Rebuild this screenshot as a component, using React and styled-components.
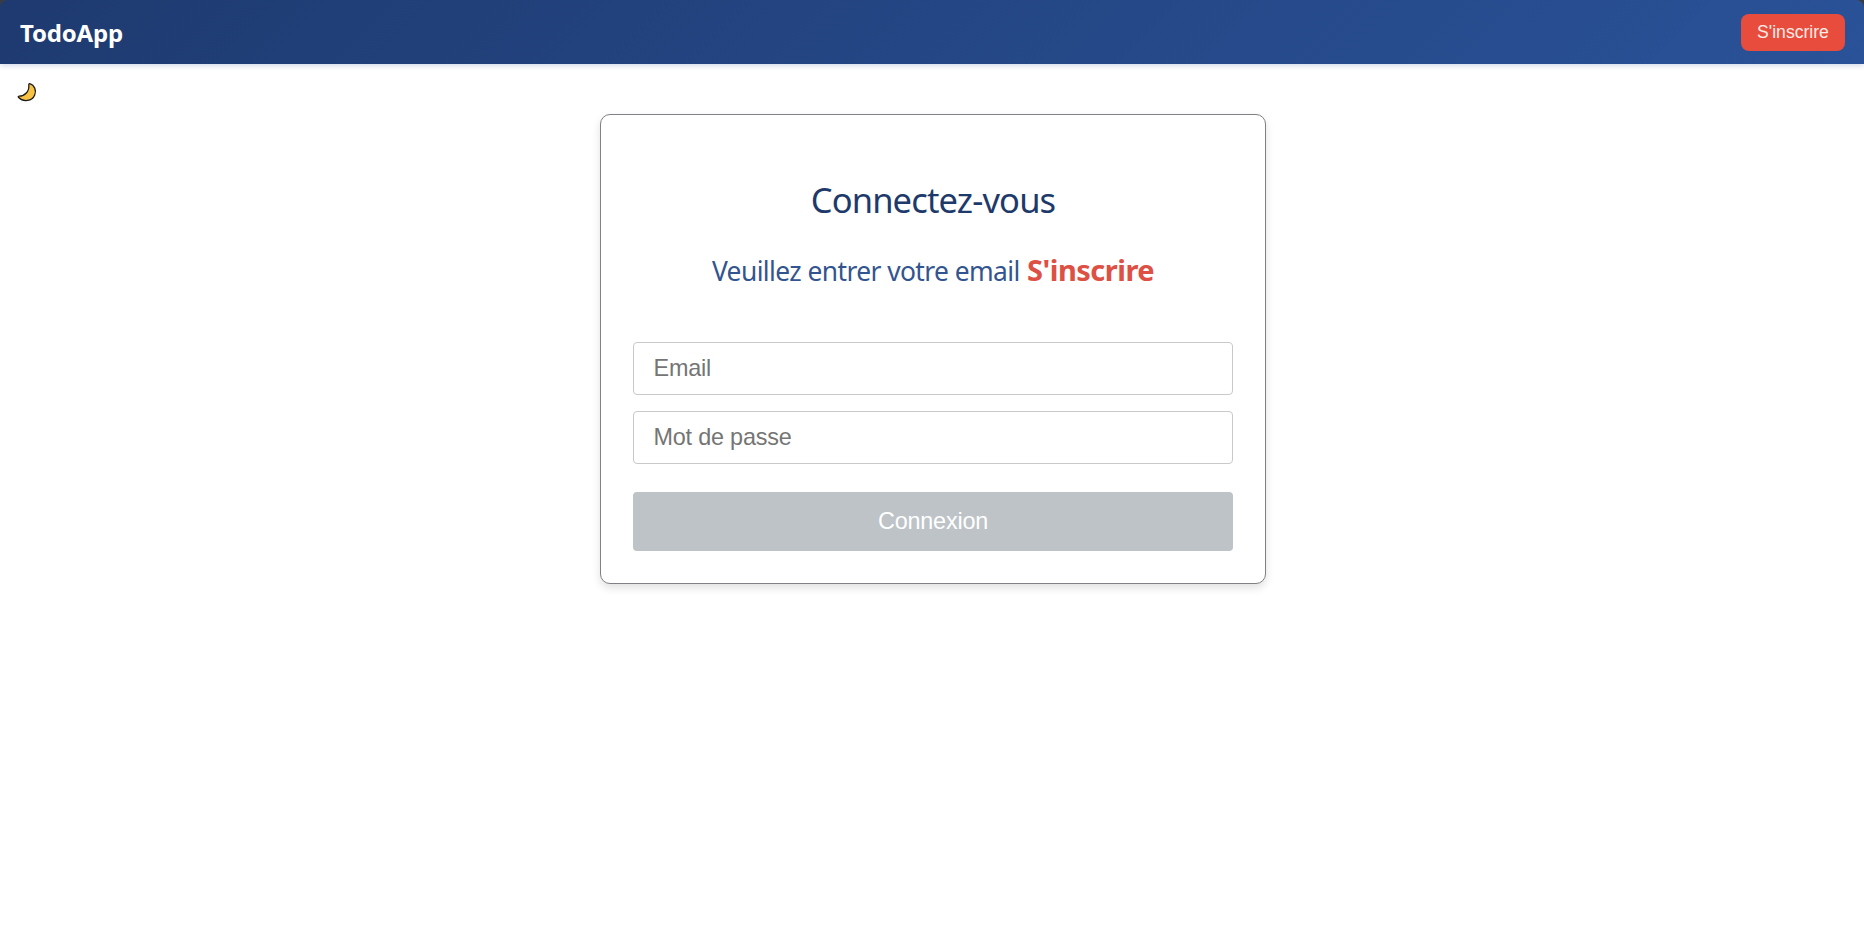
import React from "react";
import styled, { createGlobalStyle } from "styled-components";

const GlobalStyle = createGlobalStyle`
  *, *::before, *::after { box-sizing: border-box; }
  html { background: #fff; }
  body {
    margin: 0;
    min-height: 952px;
    background: #fff;
    font-family: "Noto Sans", "Open Sans", sans-serif;
  }
`;

const Page = styled.div`
  display: flex;
  flex-direction: column;
  min-height: 952px;
  background: #fff;
`;

const HeaderFrame = styled.div`
  height: 64px;
  background: linear-gradient(#3a3d42, #3a3d42) top / 100% 20px no-repeat;
`;

const Header = styled.header`
  display: flex;
  align-items: center;
  justify-content: space-between;
  height: 64px;
  padding: 0 19px 0 20px;
  border-radius: 8px 8px 0 0;
  background: linear-gradient(135deg, #1e3a70 0%, #2a5298 100%);
  box-shadow: 0 2px 5px rgba(42, 82, 152, 0.2);
`;

const Logo = styled.div`
  padding-top: 2px;
  color: #fff;
  font-size: 24px;
  font-weight: 700;
  line-height: 32px;
  letter-spacing: -0.2px;
`;

const SignUpButton = styled.button`
  width: 104px;
  height: 37px;
  margin-top: 1px;
  padding: 0 0 1px;
  border: 0;
  border-radius: 8px;
  background: #e74c3c;
  color: #ffece8;
  font: 17.6px "Liberation Sans", Arial, sans-serif;
`;

const ThemeBar = styled.div`
  display: flex;
  height: 50px;
  padding: 18px 0 0 17px;
`;

const ThemeToggle = styled.button`
  width: 20px;
  height: 20px;
  padding: 0;
  border: 0;
  background: none;
  svg { display: block; }
`;

const Card = styled.main`
  display: flex;
  flex-direction: column;
  width: 666px;
  height: 470px;
  margin: 0 0 0 600px;
  padding: 63px 32px 32px;
  border: 1px solid #7f8184;
  border-radius: 10px;
  background: #fff;
  box-shadow: 0 4px 8px rgba(0, 0, 0, 0.12);
`;

const Title = styled.h1`
  margin: 0;
  color: #1e3a6b;
  font-size: 34.5px;
  font-weight: 400;
  line-height: 44px;
  letter-spacing: -0.85px;
  text-align: center;
  white-space: nowrap;
`;

const Subtitle = styled.p`
  margin: 26px 0 0;
  color: #33558f;
  font-size: 26.4px;
  line-height: 44px;
  letter-spacing: -0.58px;
  text-align: center;
  white-space: nowrap;
`;

const SignUpLink = styled.a`
  margin-left: 1px;
  color: #dd5044;
  font-size: 29px;
  font-weight: 700;
  letter-spacing: -0.5px;
`;

const Form = styled.form`
  display: flex;
  flex-direction: column;
  gap: 16px;
  margin-top: 49px;
`;

const Field = styled.input`
  width: 100%;
  height: 53px;
  padding: 0 20px 0 19.5px;
  border: 1px solid #c8c9cb;
  border-radius: 4px;
  background: #fff;
  font: 23.4px "Liberation Sans", Arial, sans-serif;
  letter-spacing: -0.2px;
  &::placeholder { color: #757575; opacity: 1; }
`;

const SubmitButton = styled.button`
  height: 59px;
  margin-top: 12px;
  padding: 0;
  border: 0;
  border-radius: 4px;
  background: #bdc3c7;
  color: #fff;
  font: 23.4px "Liberation Sans", Arial, sans-serif;
  letter-spacing: -0.2px;
`;

const MoonIcon = () => (
  <svg width="20" height="20" viewBox="0 0 20 20" aria-hidden="true">
    <path
      d="M12.9 1.7C17.3 3.2 19.8 8.2 17.7 13C15.2 19.2 6.4 20.6 1.4 15.2C1 14.6 1.4 14.2 2.1 14.2C7.6 14 12.6 9.6 11.8 2.9C11.7 2.1 12.1 1.4 12.9 1.7Z"
      fill="#f6c244"
      stroke="#1c1a17"
      strokeWidth="1.3"
      strokeLinejoin="round"
    />
  </svg>
);

export default function App() {
  return (
    <Page>
      <GlobalStyle />
      <HeaderFrame>
        <Header>
          <Logo>TodoApp</Logo>
          <SignUpButton type="button">S'inscrire</SignUpButton>
        </Header>
      </HeaderFrame>
      <ThemeBar>
        <ThemeToggle type="button" aria-label="Mode sombre">
          <MoonIcon />
        </ThemeToggle>
      </ThemeBar>
      <Card>
        <Title>Connectez-vous</Title>
        <Subtitle>
          Veuillez entrer votre email <SignUpLink>S'inscrire</SignUpLink>
        </Subtitle>
        <Form>
          <Field type="email" placeholder="Email" />
          <Field type="password" placeholder="Mot de passe" />
          <SubmitButton type="button">Connexion</SubmitButton>
        </Form>
      </Card>
    </Page>
  );
}
